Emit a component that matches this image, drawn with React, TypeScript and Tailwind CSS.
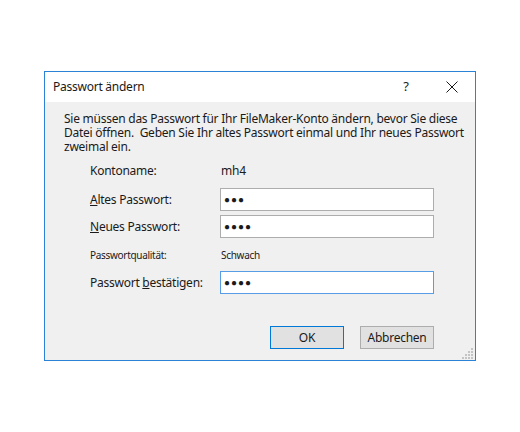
export default function App() {
  return (
    <div className="w-[520px] h-[432px] bg-white pt-[71px] pl-[44px] font-['Noto_Sans',sans-serif] text-[12px] text-[#1a1a1a] tracking-[-0.25px]">
      {/* Dialog */}
      <div className="w-[432px] h-[290px] border border-[#2a83d6] bg-[#f0f0f0] flex flex-col relative">
        {/* Title bar */}
        <div className="h-[30px] bg-white flex items-center pl-[8px]">
          <span className="flex-1 text-[12px]">Passwort ändern</span>
          <span className="w-[46px] text-center text-[13px]">?</span>
          <span className="w-[46px] flex justify-center">
            <svg width="12" height="12" viewBox="0 0 12 12" className="stroke-[#1a1a1a]" strokeWidth="1">
              <path d="M0.5 0.5 L11.5 11.5 M11.5 0.5 L0.5 11.5" />
            </svg>
          </span>
        </div>

        {/* Body */}
        <div className="flex-1 flex flex-col pl-[19px] pt-[10px]">
          <p className="leading-[14px]">
            Sie müssen das Passwort für Ihr FileMaker-Konto ändern, bevor Sie diese
            <br />
            Datei öffnen.&nbsp; Geben Sie Ihr altes Passwort einmal und Ihr neues Passwort
            <br />
            zweimal ein.
          </p>

          <div className="pl-[26px] mt-[6px] flex flex-col">
            <div className="flex items-center h-[22px]">
              <span className="w-[131px]">Kontoname:</span>
              <span>mh4</span>
            </div>
            <div className="flex items-center h-[23px] mt-[6px]">
              <span className="w-[130px]"><u>A</u>ltes Passwort:</span>
              <div className="w-[214px] h-[23px] bg-white border border-[#adadad] flex items-center pl-[3px] text-[10px] tracking-[1px]">●●●</div>
            </div>
            <div className="flex items-center h-[23px] mt-[4px]">
              <span className="w-[130px]"><u>N</u>eues Passwort:</span>
              <div className="w-[214px] h-[23px] bg-white border border-[#adadad] flex items-center pl-[3px] text-[10px] tracking-[1px]">●●●●</div>
            </div>
            <div className="flex items-center h-[22px] mt-[6px] text-[10px] tracking-[-0.3px]">
              <span className="w-[131px]">Passwortqualität:</span>
              <span>Schwach</span>
            </div>
            <div className="flex items-center h-[23px] mt-[5px]">
              <span className="w-[130px]">Passwort <u>b</u>estätigen:</span>
              <div className="w-[214px] h-[23px] bg-white border border-[#569de5] flex items-center pl-[3px] text-[10px] tracking-[1px]">●●●●</div>
            </div>
          </div>

          <div className="flex justify-end gap-[16px] pr-[41px] mt-[32px]">
            <button className="w-[74px] h-[23px] bg-[#e1e1e1] border border-[#0078d7] text-[12px]">OK</button>
            <button className="w-[74px] h-[23px] bg-[#e1e1e1] border border-[#adadad] text-[12px]">Abbrechen</button>
          </div>
        </div>

        {/* Size grip */}
        <svg width="12" height="12" viewBox="0 0 12 12" className="absolute right-[1px] bottom-[1px] fill-[#c4c4c4]">
          <rect x="9" y="1" width="2" height="2" />
          <rect x="6" y="4" width="2" height="2" />
          <rect x="9" y="4" width="2" height="2" />
          <rect x="3" y="7" width="2" height="2" />
          <rect x="6" y="7" width="2" height="2" />
          <rect x="9" y="7" width="2" height="2" />
          <rect x="0" y="10" width="2" height="2" />
          <rect x="3" y="10" width="2" height="2" />
          <rect x="6" y="10" width="2" height="2" />
          <rect x="9" y="10" width="2" height="2" />
        </svg>
      </div>
    </div>
  );
}
